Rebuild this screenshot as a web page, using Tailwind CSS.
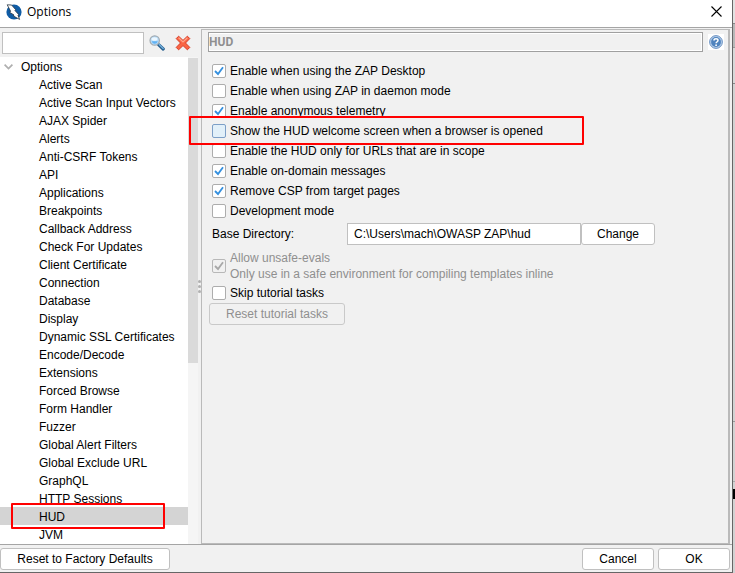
<!DOCTYPE html>
<html lang="en">
<head>
    <meta charset="UTF-8">
    <meta name="viewport" content="width=device-width, initial-scale=1.0">
    <title>Options</title>
    <script src="https://cdn.jsdelivr.net/npm/@tailwindcss/browser@4"></script>
</head>
<body class="flex h-screen overflow-hidden bg-[#d2d2d2] font-['Liberation_Sans',Arial,sans-serif] text-[12px] leading-[18px] text-black">
    <div class="flex min-w-0 flex-1 flex-col border-r border-b border-[#666] bg-[#f1f1f1]">
        <!-- Title bar -->
        <header class="flex h-7 shrink-0 items-center border-b border-[#a5a5a5] bg-white pr-2 pb-1 pl-[6px]">
            <svg class="size-4" viewBox="0 0 16 16">
                <circle cx="8" cy="8" r="7.6" fill="#0f5ca5"/>
                <path d="M1.2 .8 L5.6 1 L9.6 5.6 L9 6.6 L12.6 10.4 L12 11.2 L13.6 15.4 L7.4 12 L8 11 L3.8 8.4 L4.6 7.2 Z" fill="#fff" stroke="#24313d" stroke-width=".8"/>
            </svg>
            <h1 class="ml-[5px] flex-1 font-['Open_Sans','Noto_Sans',sans-serif] text-[12px]">Options</h1>
            <button class="flex size-4 items-center justify-center" aria-label="Close">
                <svg class="size-[11px]" viewBox="0 0 11 11" fill="none" stroke="#000" stroke-width="1.1"><path d="M.5 .5 L10.5 10.5 M10.5 .5 L.5 10.5"/></svg>
            </button>
        </header>

        <main class="flex min-h-0 flex-1">
            <!-- Options tree -->
            <nav class="flex w-[198px] shrink-0 flex-col">
                <div class="flex h-[29px] shrink-0 items-center pt-px pl-[2px]">
                    <input type="text" aria-label="Filter options" class="h-[22px] w-[142px] border border-[#c0c0c0] bg-white px-1 outline-none">
                    <button class="ml-[5px] size-4" aria-label="Search">
                        <svg class="size-4" viewBox="0 0 16 16">
                            <path d="M9.6 9.6 L14.2 14" stroke="#245c8c" stroke-width="3.2" stroke-linecap="round"/>
                            <path d="M10.2 9.6 L14.2 13.4" stroke="#73b0dc" stroke-width="1.4" stroke-linecap="round"/>
                            <circle cx="5.7" cy="5.5" r="4.7" fill="#b5dcfb" stroke="#a3abb1" stroke-width="1.2"/>
                            <ellipse cx="5.5" cy="4" rx="3" ry="1.8" fill="#ecf7ff"/>
                            <path d="M2.6 6.3 H8.8 Q8 8.8 5.7 8.8 Q3.4 8.8 2.6 6.3" fill="#61b2f3"/>
                        </svg>
                    </button>
                    <button class="ml-[10px] size-4" aria-label="Clear">
                        <svg class="size-4" viewBox="0 0 16 16">
                            <path d="M3.6 1.2 L8 5.4 L12.4 1.2 L14.8 3.6 L10.5 8 L14.8 12.4 L12.4 14.8 L8 10.6 L3.6 14.8 L1.2 12.4 L5.5 8 L1.2 3.6 Z" fill="#fa6544" stroke="#d83a24" stroke-width="1" stroke-linejoin="round"/>
                            <path d="M3.6 2.8 L8 7 L12.4 2.8" fill="none" stroke="#ffa58a" stroke-width="1.2"/>
                        </svg>
                    </button>
                </div>
                <div class="flex min-h-0 flex-1">
                    <ul class="flex-1 bg-white whitespace-nowrap leading-5">
                        <li class="flex h-[18px] items-center pt-px pl-1">
                            <svg class="mr-2 h-[6px] w-[9px]" viewBox="0 0 9 6" fill="none" stroke="#afafaf" stroke-width="1.7"><path d="M.6 .7 L4.5 4.6 L8.4 .7"/></svg>
                            Options
                        </li>
                        <li class="h-[18px] pl-[39px]">Active Scan</li>
                        <li class="h-[18px] pl-[39px]">Active Scan Input Vectors</li>
                        <li class="h-[18px] pl-[39px]">AJAX Spider</li>
                        <li class="h-[18px] pl-[39px]">Alerts</li>
                        <li class="h-[18px] pl-[39px]">Anti-CSRF Tokens</li>
                        <li class="h-[18px] pl-[39px]">API</li>
                        <li class="h-[18px] pl-[39px]">Applications</li>
                        <li class="h-[18px] pl-[39px]">Breakpoints</li>
                        <li class="h-[18px] pl-[39px]">Callback Address</li>
                        <li class="h-[18px] pl-[39px]">Check For Updates</li>
                        <li class="h-[18px] pl-[39px]">Client Certificate</li>
                        <li class="h-[18px] pl-[39px]">Connection</li>
                        <li class="h-[18px] pl-[39px]">Database</li>
                        <li class="h-[18px] pl-[39px]">Display</li>
                        <li class="h-[18px] pl-[39px]">Dynamic SSL Certificates</li>
                        <li class="h-[18px] pl-[39px]">Encode/Decode</li>
                        <li class="h-[18px] pl-[39px]">Extensions</li>
                        <li class="h-[18px] pl-[39px]">Forced Browse</li>
                        <li class="h-[18px] pl-[39px]">Form Handler</li>
                        <li class="h-[18px] pl-[39px]">Fuzzer</li>
                        <li class="h-[18px] pl-[39px]">Global Alert Filters</li>
                        <li class="h-[18px] pl-[39px]">Global Exclude URL</li>
                        <li class="h-[18px] pl-[39px]">GraphQL</li>
                        <li class="h-[18px] pl-[39px]">HTTP Sessions</li>
                        <li class="relative h-[18px] bg-[#d4d4d4] pl-[39px]">
                            HUD
                            <span class="absolute -top-1 left-[11px] h-[26px] w-[154px] rounded-[1px] border-2 border-[#f00]"></span>
                        </li>
                        <li class="h-[18px] pl-[39px]">JVM</li>
                    </ul>
                    <div class="w-[10px] bg-[#f5f5f5] pt-px">
                        <div class="h-[305px] bg-[#dadada]"></div>
                    </div>
                </div>
            </nav>

            <!-- Split handle -->
            <div class="flex w-[3px] shrink-0 flex-col items-center justify-center gap-[2px]">
                <i class="size-[3px] rounded-full bg-[#b0b0b0]"></i>
                <i class="size-[3px] rounded-full bg-[#b0b0b0]"></i>
                <i class="size-[3px] rounded-full bg-[#b0b0b0]"></i>
            </div>

            <!-- HUD panel -->
            <section class="mt-px mr-[2px] flex min-w-0 flex-1 flex-col border border-r-2 border-[#bababa] pt-[2px] pr-1 pl-[6px]">
                <div class="flex items-center">
                    <h2 class="h-5 flex-1 border border-[#a0a0a0] font-[Roboto,sans-serif] text-[12px] leading-[19px] font-bold text-[#8f8f8f] shadow-[inset_1px_1px_0_#fff,inset_-1px_-1px_0_#fff]">HUD</h2>
                    <button class="ml-[5px] flex size-4 items-center justify-center bg-white" aria-label="Help">
                        <svg class="size-[14px]" viewBox="0 0 14 14">
                            <circle cx="7" cy="7" r="6.4" fill="#b6cee9" stroke="#6d93c3"/>
                            <circle cx="7" cy="7" r="4.9" fill="#4e83be"/>
                            <path d="M5 5.4 Q5 3.7 7 3.7 Q9 3.7 9 5.3 Q9 6.2 8 6.8 Q7.1 7.3 7.1 8.3" fill="none" stroke="#fff" stroke-width="1.5"/>
                            <circle cx="7.1" cy="10.2" r=".9" fill="#fff"/>
                        </svg>
                    </button>
                </div>

                <form class="flex flex-col pt-[9px] pl-[4px]">
                    <label class="flex h-5 items-center gap-1">
                        <span class="grid size-[14px]"><input type="checkbox" checked class="peer col-start-1 row-start-1 size-[14px] appearance-none rounded-[2px] border border-[#adadad] bg-white">
                        <svg class="pointer-events-none z-10 col-start-1 row-start-1 hidden size-[14px] peer-checked:block" viewBox="0 0 14 14" fill="none" stroke="#3590df" stroke-width="1.8"><path d="M3 7 L6 10 L11 3.2"/></svg></span>
                        Enable when using the ZAP Desktop
                    </label>
                    <label class="flex h-5 items-center gap-1">
                        <input type="checkbox" class="size-[14px] appearance-none rounded-[2px] border border-[#adadad] bg-white">
                        Enable when using ZAP in daemon mode
                    </label>
                    <label class="flex h-5 items-center gap-1">
                        <span class="grid size-[14px]"><input type="checkbox" checked class="peer col-start-1 row-start-1 size-[14px] appearance-none rounded-[2px] border border-[#adadad] bg-white">
                        <svg class="pointer-events-none z-10 col-start-1 row-start-1 hidden size-[14px] peer-checked:block" viewBox="0 0 14 14" fill="none" stroke="#3590df" stroke-width="1.8"><path d="M3 7 L6 10 L11 3.2"/></svg></span>
                        Enable anonymous telemetry
                    </label>
                    <label class="relative z-20 flex h-5 items-center gap-1">
                        <input type="checkbox" class="size-[14px] appearance-none rounded-[2px] border border-[#7d9fc7] bg-[#e2f0f9]">
                        Show the HUD welcome screen when a browser is opened
                        <span class="absolute -top-[5px] -left-[23px] h-[29px] w-[395px] rounded-[1px] border-2 border-[#f00]"></span>
                    </label>
                    <label class="flex h-5 items-center gap-1">
                        <input type="checkbox" class="size-[14px] appearance-none rounded-[2px] border border-[#adadad] bg-white">
                        Enable the HUD only for URLs that are in scope
                    </label>
                    <label class="flex h-5 items-center gap-1">
                        <span class="grid size-[14px]"><input type="checkbox" checked class="peer col-start-1 row-start-1 size-[14px] appearance-none rounded-[2px] border border-[#adadad] bg-white">
                        <svg class="pointer-events-none z-10 col-start-1 row-start-1 hidden size-[14px] peer-checked:block" viewBox="0 0 14 14" fill="none" stroke="#3590df" stroke-width="1.8"><path d="M3 7 L6 10 L11 3.2"/></svg></span>
                        Enable on-domain messages
                    </label>
                    <label class="flex h-5 items-center gap-1">
                        <span class="grid size-[14px]"><input type="checkbox" checked class="peer col-start-1 row-start-1 size-[14px] appearance-none rounded-[2px] border border-[#adadad] bg-white">
                        <svg class="pointer-events-none z-10 col-start-1 row-start-1 hidden size-[14px] peer-checked:block" viewBox="0 0 14 14" fill="none" stroke="#3590df" stroke-width="1.8"><path d="M3 7 L6 10 L11 3.2"/></svg></span>
                        Remove CSP from target pages
                    </label>
                    <label class="flex h-5 items-center gap-1">
                        <input type="checkbox" class="size-[14px] appearance-none rounded-[2px] border border-[#adadad] bg-white">
                        Development mode
                    </label>

                    <div class="mt-[2px] flex h-[22px] items-center">
                        <label for="baseDir" class="w-[135px]">Base Directory:</label>
                        <input id="baseDir" type="text" value="C:\Users\mach\OWASP ZAP\hud" class="h-[22px] w-[234px] border border-[#c0c0c0] bg-white px-[6px] outline-none">
                        <button type="button" class="h-[22px] w-[74px] rounded-[3px] border border-[#c0c0c0] bg-white leading-5">Change</button>
                    </div>

                    <label class="mt-[5px] flex items-center gap-1 leading-4 text-[#8f8f8f]">
                        <span class="grid size-[14px]"><input type="checkbox" checked disabled class="peer col-start-1 row-start-1 size-[14px] appearance-none rounded-[2px] border border-[#b8b8b8] bg-[#f1f1f1]">
                        <svg class="pointer-events-none z-10 col-start-1 row-start-1 hidden size-[14px] peer-checked:block" viewBox="0 0 14 14" fill="none" stroke="#a8a8a8" stroke-width="1.8"><path d="M3 7 L6 10 L11 3.2"/></svg></span>
                        <span>Allow unsafe-evals<br>Only use in a safe environment for compiling templates inline</span>
                    </label>
                    <label class="mt-[1px] flex h-5 items-center gap-1">
                        <input type="checkbox" class="size-[14px] appearance-none rounded-[2px] border border-[#adadad] bg-white">
                        Skip tutorial tasks
                    </label>
                    <button type="button" disabled class="-ml-[3px] h-[22px] w-[136px] rounded-[3px] border border-[#c9c9c9] leading-5 text-[#8f8f8f]">Reset tutorial tasks</button>
                </form>
            </section>
        </main>

        <!-- Footer buttons -->
        <footer class="flex h-7 shrink-0 items-center gap-1 border-t border-[#a5a5a5] pt-px pr-[2px]">
            <button class="mr-auto h-[22px] w-[170px] rounded-[3px] border border-[#c0c0c0] bg-white leading-5">Reset to Factory Defaults</button>
            <button class="h-[22px] w-[72px] rounded-[3px] border border-[#c0c0c0] bg-white leading-5">Cancel</button>
            <button class="h-[22px] w-[72px] rounded-[3px] border border-[#c0c0c0] bg-white leading-5">OK</button>
        </footer>
    </div>

    <!-- Edge of the window behind -->
    <div class="flex w-[2px] shrink-0 flex-col">
        <div class="h-6 border-b border-[#888] bg-[#e2e2e2]"></div>
        <div class="h-6 border-b border-[#999] bg-[#b8b8b8]"></div>
        <div class="h-9 border-b border-[#888] bg-[#d8d8d8]"></div>
        <div class="flex-1 border-b border-[#999]"></div>
        <div class="h-[60px] border-b border-[#aaa]"></div>
        <div class="h-[7px]"></div>
        <div class="h-[10px] bg-black"></div>
        <div class="h-[74px]"></div>
    </div>
</body>
</html>
